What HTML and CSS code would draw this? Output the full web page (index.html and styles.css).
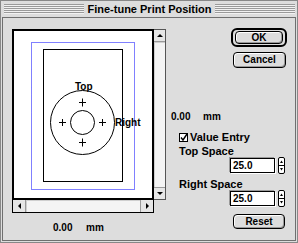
FILE: index.html
```html
<!DOCTYPE html>
<html lang="en">

<head>
    <meta charset="UTF-8">
    <title>Fine-tune Print Position</title>
    <link rel="stylesheet" href="styles.css">
</head>

<body>

    <div class="window">
        <div class="titlebar">
            <span class="stripes"></span>
            <span class="title">Fine-tune Print Position</span>
            <span class="stripes"></span>
        </div>

        <div class="panel">
            <div class="preview-col">
                <div class="viewer">
                    <div class="canvas">
                        <svg width="138" height="167" viewBox="0 0 138 167">
                            <rect x="17.5" y="11.5" width="103" height="147" fill="none" stroke="#0000ff" stroke-dasharray="1 1" />
                            <rect x="29.5" y="18.5" width="79" height="132" fill="none" stroke="#000" />
                            <circle cx="68.5" cy="91.5" r="32" fill="none" stroke="#000" />
                            <circle cx="68.5" cy="91.5" r="12" fill="none" stroke="#000" />
                            <path d="M68.5 67.5v8M65 71.5h7M68.5 107.5v8M65 111.5h7M48.5 88v7M45 91.5h7M88.5 88v7M85 91.5h7" stroke="#000" fill="none" />
                            <text x="61" y="59" class="diagram-label">Top</text>
                            <text x="101" y="95" class="diagram-label">Right</text>
                        </svg>
                    </div>
                    <div class="vscroll">
                        <span class="arrow-box"><span class="tri up"></span></span>
                        <span class="track"></span>
                        <span class="arrow-box"><span class="tri down"></span></span>
                    </div>
                    <div class="hscroll">
                        <span class="arrow-box"><span class="tri left"></span></span>
                        <span class="track"></span>
                        <span class="arrow-box"><span class="tri right"></span></span>
                    </div>
                </div>
                <div class="readout bottom-readout"><span class="num">0.00</span><span>mm</span></div>
            </div>

            <div class="controls">
                <div class="default-ring">
                    <button class="btn">OK</button>
                </div>
                <button class="btn cancel">Cancel</button>

                <div class="readout side-readout"><span class="num">0.00</span><span>mm</span></div>

                <label class="check-row">
                    <svg class="checkbox" width="9" height="9" viewBox="0 0 9 9">
                        <rect x="0.5" y="0.5" width="8" height="8" fill="#fff" stroke="#000" />
                        <path d="M2 4.5l2 2.5l4-6" fill="none" stroke="#000" stroke-width="1.4" />
                    </svg>
                    Value Entry
                </label>

                <div class="field-label">Top Space</div>
                <div class="field-row">
                    <div class="field">25.0</div>
                    <svg class="stepper" width="7" height="17" viewBox="0 0 7 17">
                        <rect x="0.5" y="0.5" width="6" height="16" rx="1.5" fill="#fff" stroke="#000" />
                        <line x1="0" y1="8.5" x2="7" y2="8.5" stroke="#000" />
                        <path d="M2 6h3L3.5 3.5z" fill="#000" />
                        <path d="M2 11h3L3.5 13.5z" fill="#000" />
                    </svg>
                </div>

                <div class="field-label second">Right Space</div>
                <div class="field-row">
                    <div class="field">25.0</div>
                    <svg class="stepper" width="7" height="17" viewBox="0 0 7 17">
                        <rect x="0.5" y="0.5" width="6" height="16" rx="1.5" fill="#fff" stroke="#000" />
                        <line x1="0" y1="8.5" x2="7" y2="8.5" stroke="#000" />
                        <path d="M2 6h3L3.5 3.5z" fill="#000" />
                        <path d="M2 11h3L3.5 13.5z" fill="#000" />
                    </svg>
                </div>

                <button class="btn reset">Reset</button>
            </div>
        </div>
    </div>

</body>

</html>
```

FILE: styles.css
```css
body,
html {
    margin: 0;
    background-color: #dddddd;
    font-family: "Liberation Sans", Arial, sans-serif;
}

.window {
    width: 298px;
    height: 243px;
    box-sizing: border-box;
    background-color: #dddddd;
    border: 1px solid #888;
    padding: 0 1px 1px 1px;
    display: flex;
    flex-direction: column;
}

.titlebar {
    height: 16px;
    display: flex;
    align-items: center;
    padding: 0 1px 0 2px;
}

.stripes {
    flex: 1;
    height: 10px;
    background: repeating-linear-gradient(to bottom, #9a9a9a 0 1px, #f2f2f2 1px 2px);
}

.title {
    font-size: 11px;
    font-weight: bold;
    padding: 0 3px;
    line-height: 14px;
}

.panel {
    flex: 1;
    display: flex;
    border: 1px solid #6f6f6f;
    background-color: #dddddd;
}

/* left side: preview with scrollbars */
.preview-col {
    padding: 11px 0 0 9px;
}

.viewer {
    display: grid;
    grid-template-columns: 142px 12px;
    grid-template-rows: 171px 13px;
}

.canvas {
    border: 2px solid #000;
    background-color: #fff;
}

.canvas svg {
    display: block;
}

.diagram-label {
    font-family: "Liberation Sans", Arial, sans-serif;
    font-size: 10px;
    font-weight: bold;
}

.vscroll {
    display: flex;
    flex-direction: column;
    border: 1px solid #555;
    border-left: none;
    background-color: #eeeeee;
}

.hscroll {
    display: flex;
    border: 1px solid #000;
    border-top: none;
    background-color: #eeeeee;
}

.track {
    flex: 1;
    background-color: #f4f4f4;
    box-shadow: inset 1px 1px 0 #cfcfcf;
}

.arrow-box {
    display: flex;
    align-items: center;
    justify-content: center;
    width: 11px;
    height: 11px;
    background-color: #e6e6e6;
}

.vscroll .arrow-box:first-child {
    border-bottom: 1px solid #9a9a9a;
}

.vscroll .arrow-box:last-child {
    border-top: 1px solid #9a9a9a;
}

.hscroll .arrow-box {
    height: 12px;
    width: 12px;
}

.hscroll .arrow-box:first-child {
    border-right: 1px solid #9a9a9a;
}

.hscroll .arrow-box:last-child {
    border-left: 1px solid #9a9a9a;
}

.tri {
    width: 0;
    height: 0;
}

.tri.up {
    border-left: 3px solid transparent;
    border-right: 3px solid transparent;
    border-bottom: 3px solid #000;
}

.tri.down {
    border-left: 3px solid transparent;
    border-right: 3px solid transparent;
    border-top: 3px solid #000;
}

.tri.left {
    border-top: 3px solid transparent;
    border-bottom: 3px solid transparent;
    border-right: 3px solid #000;
}

.tri.right {
    border-top: 3px solid transparent;
    border-bottom: 3px solid transparent;
    border-left: 3px solid #000;
}

.readout {
    font-size: 10px;
    font-weight: bold;
    line-height: 12px;
    display: flex;
}

.readout .num {
    width: 33px;
}

.bottom-readout {
    margin-top: 9px;
    padding-left: 41px;
}

/* right side: buttons and value entry */
.controls {
    display: flex;
    flex-direction: column;
    align-items: flex-start;
    padding-top: 10px;
}

.btn {
    font-family: "Liberation Sans", Arial, sans-serif;
    font-size: 10px;
    font-weight: bold;
    color: #000;
    background-color: #dddddd;
    border: 1px solid #000;
    border-radius: 4px;
    box-shadow: inset 1px 1px 0 #fff, inset -1px -1px 0 #999;
    padding: 0;
    line-height: 12px;
}

.default-ring {
    margin-left: 65px;
    width: 56px;
    height: 19px;
    box-sizing: border-box;
    border: 2px solid #000;
    border-radius: 6px;
    padding: 1px 2px;
    display: flex;
}

.default-ring .btn {
    flex: 1;
}

.btn.cancel {
    margin: 5px 0 0 67px;
    width: 53px;
    height: 16px;
}

.side-readout {
    margin: 43px 0 0 5px;
}

.readout.side-readout .num {
    width: 32px;
}

.check-row {
    display: flex;
    align-items: center;
    gap: 2px;
    margin: 8px 0 0 13px;
    font-size: 11px;
    font-weight: bold;
    line-height: 12px;
}

.field-label {
    margin: 3px 0 0 13px;
    font-size: 11px;
    font-weight: bold;
    line-height: 11px;
}

.field-label.second {
    margin-top: 5px;
}

.field-row {
    display: flex;
    align-items: center;
    margin-left: 64px;
}

.field {
    width: 45px;
    height: 15px;
    box-sizing: border-box;
    border: 1px solid #000;
    background-color: #fff;
    box-shadow: -1px -1px 0 #999, 1px 1px 0 #fff;
    font-size: 10px;
    font-weight: bold;
    line-height: 13px;
    padding-left: 2px;
}

.stepper {
    display: block;
    margin-left: 3px;
}

.btn.reset {
    margin: 7px 0 0 67px;
    width: 52px;
    height: 15px;
}
```
